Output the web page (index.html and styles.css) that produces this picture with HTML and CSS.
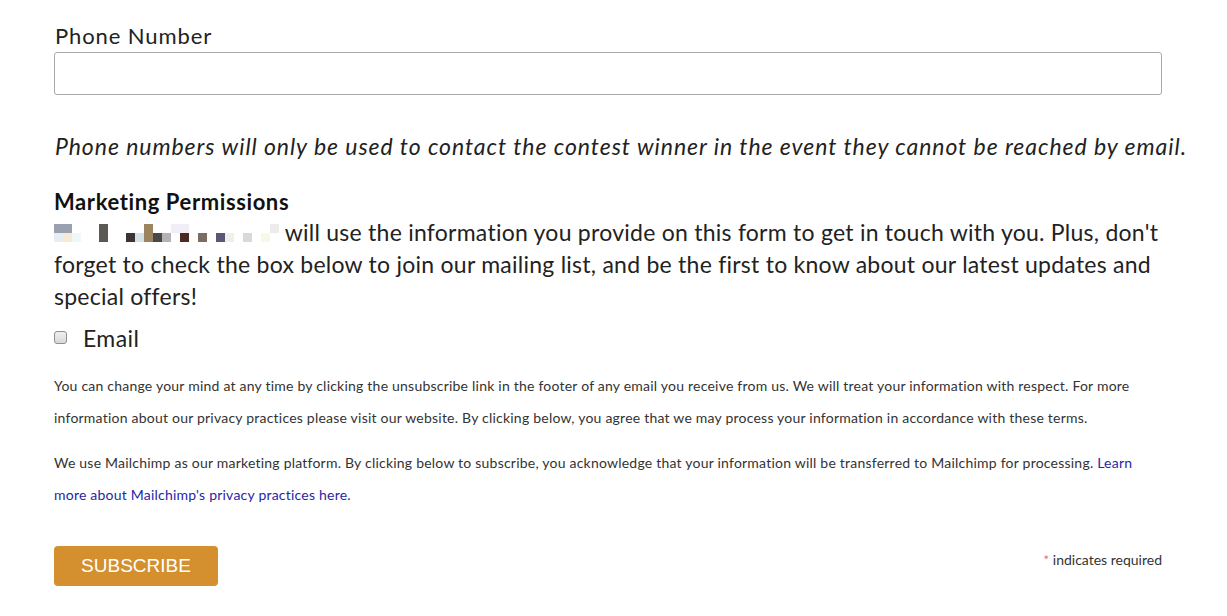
FILE: index.html
```html
<!DOCTYPE html>
<html>
<head>
<meta charset="utf-8">
<link rel="stylesheet" href="styles.css">
</head>
<body>
<form class="form">
  <div class="field">
    <label class="label">Phone Number</label>
    <input class="input" type="text">
  </div>
  <p class="note">Phone numbers will only be used to contact the contest winner in the event they cannot be reached by email.</p>
  <div class="perms">
    <h3 class="perms-title">Marketing Permissions</h3>
    <p class="perms-text"><svg class="redact" width="225" height="18" viewBox="0 0 225 18" aria-hidden="true">
      <rect x="0" y="0" width="18" height="9" fill="#9aa0b0"/>
      <rect x="45" y="0" width="9" height="18" fill="#5a5a52"/>
      <rect x="90" y="0" width="9" height="18" fill="#9c8460"/>
      <rect x="117" y="0" width="18" height="9" fill="#f2eef8"/>
      <rect x="216" y="0" width="9" height="9" fill="#ececec"/>
      <rect x="0" y="9" width="9" height="9" fill="#e6eef4"/>
      <rect x="9" y="9" width="9" height="9" fill="#f8e8d8"/>
      <rect x="18" y="9" width="9" height="9" fill="#eef8f8"/>
      <rect x="72" y="9" width="9" height="9" fill="#3e3434"/>
      <rect x="81" y="9" width="9" height="9" fill="#d2e2e8"/>
      <rect x="99" y="9" width="9" height="9" fill="#4a4846"/>
      <rect x="108" y="9" width="9" height="9" fill="#b4b2b2"/>
      <rect x="126" y="9" width="9" height="9" fill="#4a2a22"/>
      <rect x="144" y="9" width="9" height="9" fill="#7c6c64"/>
      <rect x="162" y="9" width="9" height="9" fill="#5a5878"/>
      <rect x="171" y="9" width="9" height="9" fill="#eef0ea"/>
      <rect x="189" y="9" width="9" height="9" fill="#d6dad8"/>
      <rect x="207" y="9" width="9" height="9" fill="#f6f8e8"/>
    </svg> will use the information you provide on this form to get in touch with you. Plus, don't forget to check the box below to join our mailing list, and be the first to know about our latest updates and special offers!</p>
    <label class="check"><span class="box"></span><span class="check-label">Email</span></label>
    <p class="small">You can change your mind at any time by clicking the unsubscribe link in the footer of any email you receive from us. We will treat your information with respect. For more information about our privacy practices please visit our website. By clicking below, you agree that we may process your information in accordance with these terms.</p>
    <p class="small">We use Mailchimp as our marketing platform. By clicking below to subscribe, you acknowledge that your information will be transferred to Mailchimp for processing. <a class="link" href="#">Learn more about Mailchimp's privacy practices here.</a></p>
  </div>
  <div class="actions">
    <button class="btn" type="button">SUBSCRIBE</button>
    <span class="req"><span class="star">*</span> indicates required</span>
  </div>
</form>
</body>
</html>
```
FILE: styles.css
```css
html, body {
  margin: 0;
  padding: 0;
  background: #fff;
}
body {
  font-family: "Lato", "Open Sans", sans-serif;
  color: #222;
}
.form {
  width: 1108px;
  margin-left: 54px;
  padding-top: 22px;
}
.field {
  display: flex;
  flex-direction: column;
}
.label {
  font-size: 22px;
  line-height: 28px;
  letter-spacing: 0.9px;
  color: #222;
  padding-left: 1px;
}
.input {
  box-sizing: border-box;
  height: 43px;
  width: 1108px;
  margin-top: 2px;
  border: 1px solid #a9a9a9;
  border-radius: 3px;
  background: #fff;
}
.note {
  margin: 36px 0 0 0;
  font-size: 23px;
  line-height: 30px;
  font-style: italic;
  letter-spacing: 0.95px;
  white-space: nowrap;
  padding-left: 1px;
}
.perms {
  margin-top: 27px;
}
.perms-title {
  margin: 0;
  font-size: 22px;
  line-height: 28px;
  font-weight: 700;
  letter-spacing: 0.6px;
  color: #111;
}
.perms-text {
  margin: 0;
  font-size: 23px;
  line-height: 32px;
  letter-spacing: 0.25px;
}
.redact {
  display: inline-block;
  vertical-align: -1px;
}
.check {
  display: flex;
  align-items: center;
  margin-top: 10px;
  height: 32px;
}
.box {
  box-sizing: border-box;
  width: 13px;
  height: 13px;
  border: 1px solid #8e8e8e;
  border-radius: 3px;
  background: linear-gradient(#f0f0f0, #d8d8d8);
  margin-top: -1px;
}
.check-label {
  font-size: 23px;
  margin-left: 16px;
  letter-spacing: 0.4px;
}
.small {
  margin: 13px 0 0 0;
  font-size: 14px;
  line-height: 32px;
  letter-spacing: 0.22px;
  color: #333;
}
.perms .check + .small {
  margin-top: 16px;
}
.link {
  color: #2626a6;
  text-decoration: none;
}
.actions {
  display: flex;
  justify-content: space-between;
  align-items: flex-start;
  margin-top: 35px;
}
.btn {
  width: 164px;
  height: 40px;
  background: #d4902e;
  color: #fff;
  border: none;
  border-radius: 4px;
  font-family: "Liberation Sans", Arial, sans-serif;
  font-size: 19px;
  padding: 0;
}
.req {
  font-size: 14px;
  color: #333;
  margin-top: 5px;
}
.star {
  color: #e07b5a;
}
```
